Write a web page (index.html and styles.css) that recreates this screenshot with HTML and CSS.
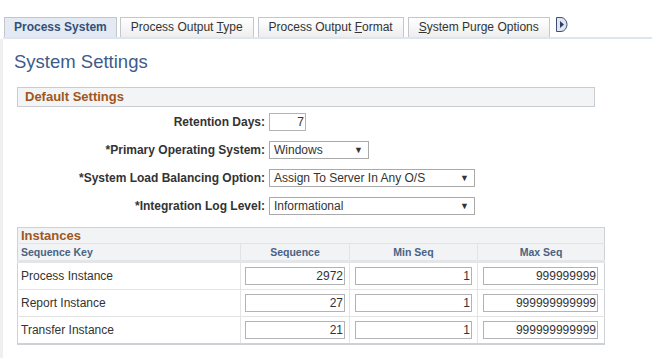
FILE: index.html
```html
<!DOCTYPE html>
<html>
<head>
<meta charset="utf-8">
<link rel="stylesheet" href="styles.css">
</head>
<body>
<div class="page">
  <div class="edge"></div>
  <div class="main">
    <div class="tabbar">
      <div class="tab active">Process System</div>
      <div class="tab">Process Output <u>T</u>ype</div>
      <div class="tab spaced">Process Output <u>F</u>ormat</div>
      <div class="tab spaced"><u>S</u>ystem Purge Options</div>
      <svg class="tabnext" width="12" height="15" viewBox="0 0 12 15">
        <path d="M0.5 0.5 H5 A6 7 0 0 1 5 14.5 H0.5 Z" fill="#dfe6ef" stroke="#3d4f73" stroke-width="1"/>
        <path d="M4 4 L8 7.5 L4 11 Z" fill="#2c3f66"/>
      </svg>
    </div>
    <h1 class="title">System Settings</h1>
    <div class="group-head">Default Settings</div>
    <div class="form">
      <label class="lbl">Retention Days:</label>
      <div><input class="num w-ret" type="text" value="7" readonly></div>
      <label class="lbl">*Primary Operating System:</label>
      <div class="sel w-os"><span>Windows</span><span class="arrow">&#9660;</span></div>
      <label class="lbl">*System Load Balancing Option:</label>
      <div class="sel w-wide"><span>Assign To Server In Any O/S</span><span class="arrow">&#9660;</span></div>
      <label class="lbl">*Integration Log Level:</label>
      <div class="sel w-wide"><span>Informational</span><span class="arrow">&#9660;</span></div>
    </div>
    <table class="grid">
      <colgroup>
        <col class="c1"><col class="c2"><col class="c3"><col class="c4">
      </colgroup>
      <thead>
        <tr class="cap"><th colspan="4">Instances</th></tr>
        <tr class="heads">
          <th class="left">Sequence Key</th>
          <th>Sequence</th>
          <th>Min Seq</th>
          <th>Max Seq</th>
        </tr>
      </thead>
      <tbody>
        <tr>
          <td class="key">Process Instance</td>
          <td class="seq"><input class="num" type="text" value="2972" readonly></td>
          <td class="min"><input class="num" type="text" value="1" readonly></td>
          <td class="max"><input class="num" type="text" value="999999999" readonly></td>
        </tr>
        <tr>
          <td class="key">Report Instance</td>
          <td class="seq"><input class="num" type="text" value="27" readonly></td>
          <td class="min"><input class="num" type="text" value="1" readonly></td>
          <td class="max"><input class="num" type="text" value="999999999999" readonly></td>
        </tr>
        <tr>
          <td class="key">Transfer Instance</td>
          <td class="seq"><input class="num" type="text" value="21" readonly></td>
          <td class="min"><input class="num" type="text" value="1" readonly></td>
          <td class="max"><input class="num" type="text" value="999999999999" readonly></td>
        </tr>
      </tbody>
    </table>
  </div>
</div>
</body>
</html>
```

FILE: styles.css
```css
html, body {
  margin: 0;
  padding: 0;
  background: #ffffff;
  font-family: "Liberation Sans", Arial, sans-serif;
  color: #333333;
}

.page {
  display: flex;
  min-height: 358px;
}

.edge {
  width: 3px;
  margin-top: 39px;
  background: #efefef;
  flex: 0 0 3px;
}

.main {
  flex: 1;
  min-width: 0;
}

/* Tabs */
.tabbar {
  display: flex;
  align-items: flex-start;
  gap: 3px;
  padding: 17px 0 0 1px;
  border-bottom: 2px solid #dce5f0;
  height: 20px;
}

.tab {
  box-sizing: border-box;
  height: 20px;
  padding: 0 10px;
  border: 1px solid #c3c6ca;
  border-bottom: none;
  background: linear-gradient(#ffffff, #eeeeee);
  font-size: 12px;
  line-height: 19px;
  color: #333333;
  white-space: nowrap;
}

.tab.spaced {
  margin-left: 1px;
}

.tab.active {
  background: #e3eaf3;
  font-weight: bold;
  color: #34507a;
  padding: 0 9px;
}

.tab u {
  text-decoration: underline;
  text-underline-offset: 1px;
}

.tabnext {
  margin-left: 3px;
  display: block;
}

/* Title */
.title {
  margin: 12px 0 14px 11px;
  font-size: 18.5px;
  line-height: 22px;
  font-weight: normal;
  color: #3d5c88;
}

/* Group header */
.group-head {
  margin-left: 14px;
  width: 578px;
  box-sizing: border-box;
  height: 20px;
  padding: 0 7px;
  border: 1px solid #c9cdd1;
  background: #f2f4f5;
  font-size: 13px;
  font-weight: bold;
  line-height: 17px;
  color: #a0561e;
}

/* Form */
.form {
  display: grid;
  grid-template-columns: 248px auto;
  grid-auto-rows: 28px;
  column-gap: 4px;
  align-items: center;
  margin: 1px 0 0 14px;
}

.lbl {
  text-align: right;
  font-size: 12px;
  font-weight: bold;
  color: #333333;
  white-space: nowrap;
}

.num {
  box-sizing: border-box;
  height: 18px;
  margin: 0;
  padding: 0 1px 0 2px;
  border: 1px solid #b3b3b3;
  background: #ffffff;
  font-family: "Liberation Sans", Arial, sans-serif;
  font-size: 12px;
  color: #333333;
  text-align: right;
  outline: none;
  display: block;
}

.w-ret {
  width: 37px;
}

.sel {
  box-sizing: border-box;
  height: 18px;
  display: flex;
  align-items: center;
  justify-content: space-between;
  padding: 0 5px 1px 4px;
  border: 1px solid #a9a9a9;
  background: #ffffff;
  font-size: 12px;
  line-height: 14px;
  color: #333333;
}

.sel .arrow {
  font-size: 9px;
  line-height: 10px;
  color: #333333;
  padding-top: 1px;
}

.w-os {
  width: 100px;
}

.w-wide {
  width: 206px;
}

/* Instances grid */
.grid {
  margin: 7px 0 0 14px;
  width: 587px;
  border-collapse: collapse;
  table-layout: fixed;
  border: 1px solid #ced2d6;
  border-bottom-width: 2px;
}

.c1 { width: 223px; }
.c2 { width: 109px; }
.c3 { width: 128px; }
.c4 { width: 127px; }

.grid .cap th {
  height: 15px;
  padding: 0 0 0 3px;
  background: #f1f3f4;
  text-align: left;
  font-size: 13px;
  font-weight: bold;
  line-height: 15px;
  color: #a0561e;
  border-bottom: 1px solid #e1e4e6;
}

.grid .heads th {
  height: 16px;
  padding: 0;
  background: #f1f3f4;
  font-size: 10.5px;
  font-weight: bold;
  line-height: 16px;
  color: #4a6283;
  text-align: center;
  border-left: 1px solid #e1e4e6;
  border-bottom: 3px solid #e3e5e7;
}

.grid .heads th.left {
  text-align: left;
  padding-left: 3px;
  border-left: none;
}

.grid td {
  height: 26px;
  padding: 0;
  border-top: 1px solid #e4e4e4;
  border-left: 1px solid #e4e4e4;
  font-size: 12px;
  vertical-align: middle;
}

.grid tbody tr:first-child td {
  border-top: none;
}

.grid td.key {
  padding-left: 3px;
  border-left: none;
  color: #333333;
}

.grid td.seq input {
  width: 100px;
  margin-left: 4px;
}

.grid td.min input {
  width: 117px;
  margin-left: 5px;
}

.grid td.max input {
  width: 115px;
  margin-left: 5px;
}
```
